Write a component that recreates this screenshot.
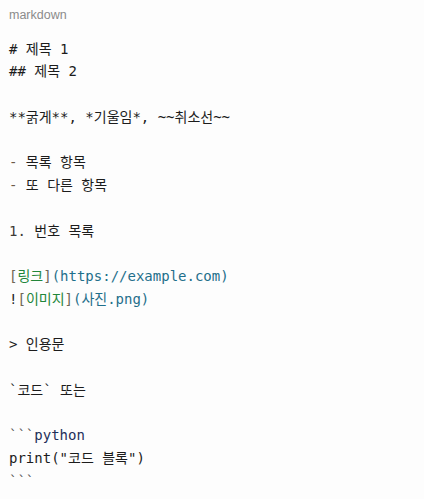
import React from "react";

const mono = {
  fontFamily:
    '"DejaVu Sans Mono", "Noto Sans CJK KR", monospace',
};

const Bracket = ({ children }) => <span className="text-[#6f6656]">{children}</span>;

const App = () => {
  return (
    <div className="min-h-screen w-full bg-[#fdfdfd]">
      {/* Header label */}
      <div className="px-[9px] pt-[7px] text-[12.5px] leading-4 text-[#8b8b8b] font-['Liberation_Sans',Arial,sans-serif]">
        markdown
      </div>

      {/* Code body */}
      <pre
        style={mono}
        className="px-[9px] pt-[14.5px] text-[14px] leading-[22.75px] text-[#1c1c1c] whitespace-pre font-['DejaVu_Sans_Mono','Noto_Sans_CJK_KR',monospace]"
      >
        <div># 제목 1</div>
        <div>## 제목 2</div>
        <div>&nbsp;</div>
        <div>**굵게**, *기울임*, ~~취소선~~</div>
        <div>&nbsp;</div>
        <div>
          <span className="text-[#6b5a48]">-</span> 목록 항목
        </div>
        <div>
          <span className="text-[#6b5a48]">-</span> 또 다른 항목
        </div>
        <div>&nbsp;</div>
        <div>
          <span className="text-[#3d3a36]">1.</span> 번호 목록
        </div>
        <div>&nbsp;</div>
        <div>
          <Bracket>[</Bracket>
          <span className="text-[#22863a]">링크</span>
          <Bracket>]</Bracket>
          <span className="text-[#1f6f8b]">(https://example.com)</span>
        </div>
        <div>
          <span>!</span>
          <Bracket>[</Bracket>
          <span className="text-[#22863a]">이미지</span>
          <Bracket>]</Bracket>
          <span className="text-[#1f6f8b]">(사진.png)</span>
        </div>
        <div>&nbsp;</div>
        <div>&gt; 인용문</div>
        <div>&nbsp;</div>
        <div>`코드` 또는</div>
        <div>&nbsp;</div>
        <div>
          <span className="text-[#555]">```</span>
          <span className="text-[#1f2f5a]">python</span>
        </div>
        <div>print("코드 블록")</div>
        <div>
          <span className="text-[#555]">```</span>
        </div>
      </pre>
    </div>
  );
};

export default App;
